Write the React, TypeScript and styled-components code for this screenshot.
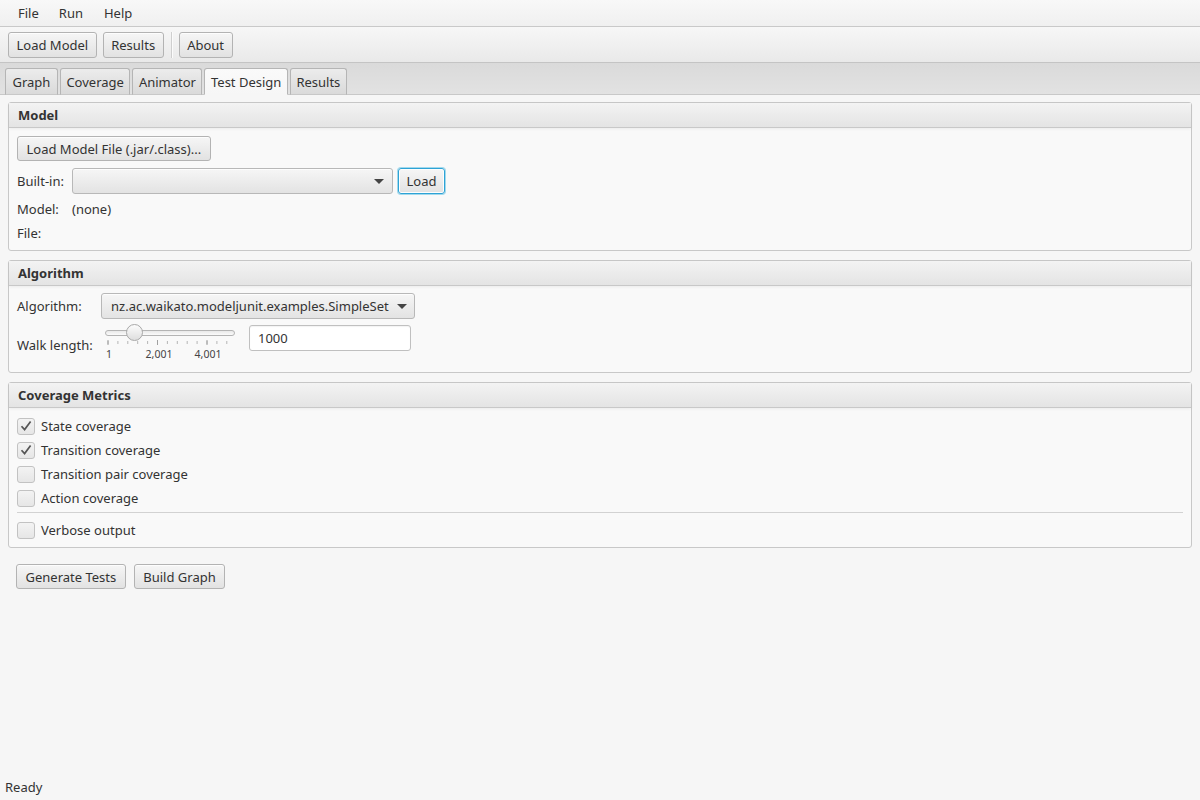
import React from "react";
import styled, { createGlobalStyle } from "styled-components";

const GlobalStyle = createGlobalStyle`
  html, body {
    margin: 0;
    padding: 0;
    background: #f4f4f4;
  }
  body {
    font-family: "Noto Sans", "Open Sans", sans-serif;
    font-size: 13px;
    color: #333;
  }
  * { box-sizing: border-box; }
`;

const Window = styled.div`
  width: 1200px;
  height: 800px;
  display: flex;
  flex-direction: column;
  overflow: hidden;
`;

const MenuBar = styled.div`
  height: 27px;
  display: flex;
  align-items: center;
  padding-left: 9px;
  background: linear-gradient(to bottom, #f8f8f8, #f0f0f0);
  border-bottom: 1px solid #c9c9c9;
`;

const MenuItem = styled.div<{ gap?: number }>`
  padding: 0 9px;
  line-height: 26px;
  margin-right: ${(p) => p.gap ?? 0}px;
`;

const ToolBar = styled.div`
  height: 36px;
  display: flex;
  align-items: center;
  gap: 6px;
  padding: 0 8px;
  background: linear-gradient(to bottom, #f7f7f7, #e9e9e9);
  border-bottom: 1px solid #c4c4c4;
`;

const Button = styled.button<{ focused?: boolean }>`
  height: 26px;
  padding: 0 7.5px;
  font-family: inherit;
  font-size: 13px;
  color: #333;
  border-radius: 3px;
  border: 1px solid ${(p) => (p.focused ? "#2ea3d6" : "#b3b3b3")};
  box-shadow: ${(p) =>
    p.focused
      ? "0 0 0 1px rgba(3,158,211,0.35), inset 0 0 0 1px #fdfdfd"
      : "inset 0 1px 0 #fdfdfd"};
  background: linear-gradient(to bottom, #f6f6f6, #e2e2e2);
  white-space: nowrap;
  cursor: default;
`;

const PaneButton = styled(Button)`
  height: 25px;
  padding: 0 8.5px;
  margin-bottom: 1px;
`;

const ActionButton = styled(Button)`
  height: 25px;
  padding: 0 8.5px;
`;

const ToolSeparator = styled.div`
  width: 1px;
  height: 26px;
  margin: 0 1px;
  background: #cfcfcf;
  box-shadow: 1px 0 0 #fbfbfb;
`;

const TabHeader = styled.div`
  height: 32px;
  display: flex;
  align-items: flex-end;
  gap: 2px;
  padding-left: 5px;
  background: linear-gradient(to bottom, #dadada, #e2e2e2);
  border-bottom: 1px solid #c8c8c8;
`;

const Tab = styled.div<{ selected?: boolean; pad?: number }>`
  height: 27px;
  margin-bottom: -1px;
  padding: 0 ${(p) => p.pad ?? 5.5}px;
  display: flex;
  align-items: center;
  border: 1px solid #b5b5b5;
  border-bottom: ${(p) => (p.selected ? "1px solid #f6f6f6" : "1px solid #c8c8c8")};
  border-radius: 3px 3px 0 0;
  background: ${(p) =>
    p.selected
      ? "linear-gradient(to bottom, #fafafa, #f6f6f6)"
      : "linear-gradient(to bottom, #ececec, #dadada)"};
`;

const Content = styled.div`
  flex: 1;
  display: flex;
  flex-direction: column;
  gap: 9px;
  padding: 7px 8px 0 8px;
  background: #f6f6f6;
`;

const Pane = styled.section`
  border: 1px solid #c8c8c8;
  border-radius: 3px;
  background: #f9f9f9;
`;

const PaneTitle = styled.div`
  height: 25px;
  display: flex;
  align-items: center;
  padding-left: 9px;
  font-weight: bold;
  color: #333;
  background: linear-gradient(to bottom, #f3f3f3, #e4e4e4);
  border-bottom: 1px solid #c8c8c8;
  box-shadow: 0 1px 3px rgba(0, 0, 0, 0.06);
`;

const PaneBody = styled.div<{ top?: number }>`
  display: flex;
  flex-direction: column;
  gap: 6px;
  padding: ${(p) => p.top ?? 8}px 8px 8px 8px;
`;

const Row = styled.div<{ top?: boolean }>`
  display: flex;
  align-items: ${(p) => (p.top ? "flex-start" : "center")};
  min-height: 18px;
`;

const FieldLabel = styled.span<{ width: number; offset?: number }>`
  width: ${(p) => p.width}px;
  margin-top: ${(p) => p.offset ?? 0}px;
  flex-shrink: 0;
  white-space: nowrap;
`;

const Combo = styled.div<{ width: number }>`
  width: ${(p) => p.width}px;
  height: 26px;
  display: flex;
  align-items: center;
  justify-content: space-between;
  padding: 0 8px 0 9px;
  border: 1px solid #b8b8b8;
  border-radius: 3px;
  background: linear-gradient(to bottom, #f6f6f6, #e3e3e3);
  box-shadow: inset 0 1px 0 #fdfdfd;
  white-space: nowrap;
`;

const Arrow = styled.span`
  width: 0;
  height: 0;
  margin-left: 8px;
  border-left: 5px solid transparent;
  border-right: 5px solid transparent;
  border-top: 5px solid #444;
`;

const Spacer = styled.span<{ width: number }>`
  width: ${(p) => p.width}px;
  flex-shrink: 0;
`;

const TextField = styled.div`
  width: 162px;
  height: 26px;
  display: flex;
  align-items: center;
  padding: 0 8px;
  border: 1px solid #c0c0c0;
  border-radius: 3px;
  background: #fff;
  box-shadow: inset 0 1px 1px rgba(0, 0, 0, 0.05);
`;

const SliderBox = styled.div`
  position: relative;
  width: 136px;
  height: 39px;
  margin-right: 10px;
`;

const Track = styled.div`
  position: absolute;
  left: 2px;
  top: 5px;
  width: 130px;
  height: 6px;
  border: 1px solid #b4b4b4;
  border-radius: 3px;
  background: linear-gradient(to bottom, #e9e9e9, #fbfbfb);
`;

const Thumb = styled.div`
  position: absolute;
  left: 23px;
  top: -1px;
  width: 17px;
  height: 17px;
  border-radius: 50%;
  border: 1px solid #a8a8a8;
  background: linear-gradient(to bottom, #fcfcfc, #dedede);
`;

const Ticks = styled.svg`
  position: absolute;
  left: 0;
  top: 14px;
`;

const CheckRow = styled.label`
  display: flex;
  align-items: center;
  gap: 6px;
  height: 18px;
`;

const Box = styled.span`
  width: 18px;
  height: 17px;
  display: flex;
  align-items: center;
  justify-content: center;
  border: 1px solid #c2c2c2;
  border-radius: 3px;
  background: linear-gradient(to bottom, #f3f3f3, #e6e6e6);
`;

const Divider = styled.div`
  height: 1px;
  background: #d2d2d2;
  margin: -1px 0 2px;
`;

const ActionBar = styled.div`
  display: flex;
  gap: 8px;
  padding: 7px 8px;
`;

const StatusBar = styled.div`
  height: 26px;
  display: flex;
  align-items: center;
  padding: 0 5px;
  background: #f6f6f6;
`;

function Check({ checked }: { checked?: boolean }) {
  return (
    <Box>
      {checked && (
        <svg width="12" height="12" viewBox="0 0 12 12">
          <path d="M1.5 6.2 L4.6 9.6 L10.6 1.6" fill="none" stroke="#555" strokeWidth="1.7" />
        </svg>
      )}
    </Box>
  );
}

function WalkSlider() {
  const minor = Array.from({ length: 13 }, (_, i) => 5 + i * 9.9);
  const major = [5, 54.5, 104];
  const labels = [
    { x: 6, t: "1" },
    { x: 56, t: "2,001" },
    { x: 105, t: "4,001" },
  ];
  return (
    <SliderBox>
      <Track />
      <Thumb />
      <Ticks width="136" height="24">
        {minor.map((x) => (
          <line key={x} x1={x} x2={x} y1="2" y2="5" stroke="#b5b5b5" strokeWidth="1" />
        ))}
        {major.map((x) => (
          <line key={"m" + x} x1={x} x2={x} y1="1" y2="6" stroke="#a0a0a0" strokeWidth="1" />
        ))}
        {labels.map((l) => (
          <text
            key={l.t}
            x={l.x}
            y="19"
            fontSize="10.5"
            textAnchor="middle"
            fill="#444"
            fontFamily="Noto Sans, sans-serif"
          >
            {l.t}
          </text>
        ))}
      </Ticks>
    </SliderBox>
  );
}

const metrics = [
  { label: "State coverage", checked: true },
  { label: "Transition coverage", checked: true },
  { label: "Transition pair coverage", checked: false },
  { label: "Action coverage", checked: false },
];

export default function App() {
  return (
    <Window>
      <GlobalStyle />
      <MenuBar>
        <MenuItem gap={2}>File</MenuItem>
        <MenuItem gap={3}>Run</MenuItem>
        <MenuItem>Help</MenuItem>
      </MenuBar>
      <ToolBar>
        <Button>Load Model</Button>
        <Button>Results</Button>
        <ToolSeparator />
        <Button>About</Button>
      </ToolBar>
      <TabHeader>
        <Tab pad={6.5}>Graph</Tab>
        <Tab>Coverage</Tab>
        <Tab>Animator</Tab>
        <Tab selected>Test Design</Tab>
        <Tab>Results</Tab>
      </TabHeader>
      <Content>
        <Pane>
          <PaneTitle>Model</PaneTitle>
          <PaneBody>
            <Row>
              <PaneButton>Load Model File (.jar/.class)...</PaneButton>
            </Row>
            <Row>
              <FieldLabel width={55}>Built-in:</FieldLabel>
              <Combo width={321}>
                <span />
                <Arrow />
              </Combo>
              <Spacer width={5} />
              <Button focused>Load</Button>
            </Row>
            <Row>
              <FieldLabel width={55}>Model:</FieldLabel>
              <span>(none)</span>
            </Row>
            <Row>
              <FieldLabel width={55}>File:</FieldLabel>
            </Row>
          </PaneBody>
        </Pane>

        <Pane>
          <PaneTitle>Algorithm</PaneTitle>
          <PaneBody top={7}>
            <Row>
              <FieldLabel width={84}>Algorithm:</FieldLabel>
              <Combo width={314}>
                <span>nz.ac.waikato.modeljunit.examples.SimpleSet</span>
                <Arrow />
              </Combo>
            </Row>
            <Row top>
              <FieldLabel width={86} offset={11}>
                Walk length:
              </FieldLabel>
              <WalkSlider />
              <TextField>1000</TextField>
            </Row>
          </PaneBody>
        </Pane>

        <Pane>
          <PaneTitle>Coverage Metrics</PaneTitle>
          <PaneBody top={9}>
            {metrics.map((m) => (
              <CheckRow key={m.label}>
                <Check checked={m.checked} />
                {m.label}
              </CheckRow>
            ))}
            <Divider />
            <CheckRow>
              <Check />
              Verbose output
            </CheckRow>
          </PaneBody>
        </Pane>

        <ActionBar>
          <ActionButton>Generate Tests</ActionButton>
          <ActionButton>Build Graph</ActionButton>
        </ActionBar>
      </Content>
      <StatusBar>Ready</StatusBar>
    </Window>
  );
}
